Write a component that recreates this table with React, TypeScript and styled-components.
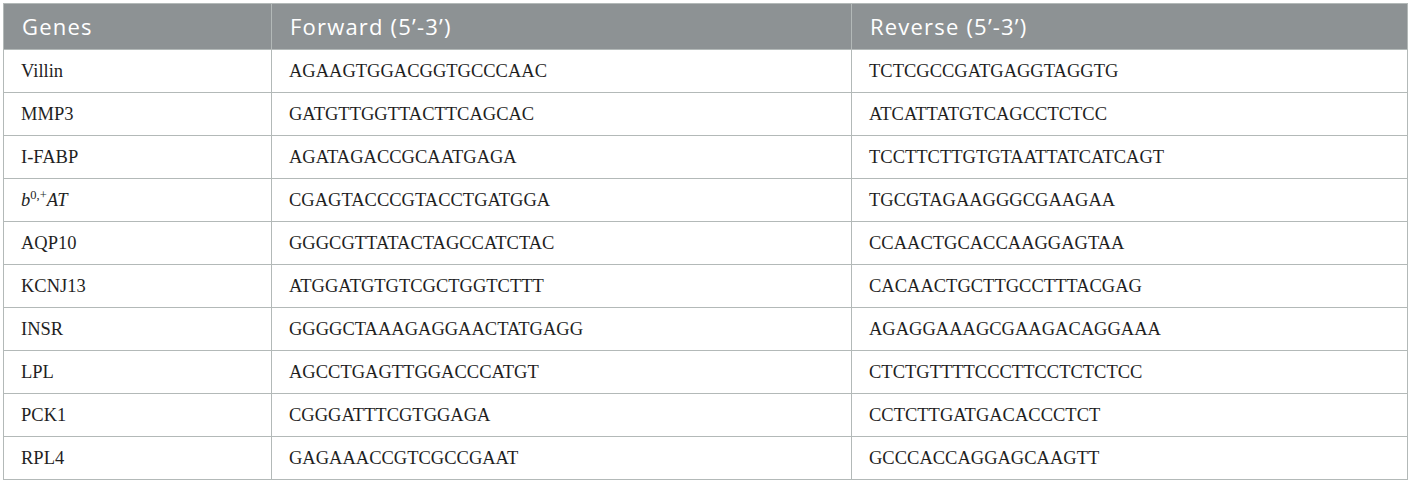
import React from "react";
import styled, { createGlobalStyle } from "styled-components";

const Global = createGlobalStyle`
  html, body { margin: 0; padding: 0; background: #ffffff; }
  body { padding: 3px 0 0 3px; }
`;

const Table = styled.table`
  width: 1404px;
  border-collapse: collapse;
  table-layout: fixed;
  border: 1.5px solid #b3b9b8;
`;

const HeadCell = styled.th<{ $w: number }>`
  width: ${(p) => p.$w}px;
  height: 46px;
  background: #8d9294;
  color: #ffffff;
  font-family: "Open Sans", "Noto Sans", sans-serif;
  font-weight: 400;
  font-size: 22px;
  letter-spacing: 1.2px;
  text-align: left;
  padding: 0 0 2px 18px;
  border-left: 1.5px solid #b3b9b8;
  box-sizing: border-box;
`;

const Row = styled.tr`
  border-top: 1.5px solid #b3b9b8;
`;

const Cell = styled.td`
  height: 43px;
  padding: 0 0 0 17px;
  font-family: "Times New Roman", "Liberation Serif", "Noto Serif", "DejaVu Serif", serif;
  font-size: 18.5px;
  color: #1f1f1f;
  border-left: 1.5px solid #b3b9b8;
  box-sizing: border-box;
`;

const Ital = styled.i`
  font-style: italic;
`;

const Sup = styled.sup`
  font-style: normal;
  font-size: 12.5px;
  vertical-align: 7px;
  line-height: 0;
`;

const rows: [React.ReactNode, string, string][] = [
  ["Villin", "AGAAGTGGACGGTGCCCAAC", "TCTCGCCGATGAGGTAGGTG"],
  ["MMP3", "GATGTTGGTTACTTCAGCAC", "ATCATTATGTCAGCCTCTCC"],
  ["I-FABP", "AGATAGACCGCAATGAGA", "TCCTTCTTGTGTAATTATCATCAGT"],
  [
    <Ital key="b">
      b<Sup>0,+</Sup>AT
    </Ital>,
    "CGAGTACCCGTACCTGATGGA",
    "TGCGTAGAAGGGCGAAGAA",
  ],
  ["AQP10", "GGGCGTTATACTAGCCATCTAC", "CCAACTGCACCAAGGAGTAA"],
  ["KCNJ13", "ATGGATGTGTCGCTGGTCTTT", "CACAACTGCTTGCCTTTACGAG"],
  ["INSR", "GGGGCTAAAGAGGAACTATGAGG", "AGAGGAAAGCGAAGACAGGAAA"],
  ["LPL", "AGCCTGAGTTGGACCCATGT", "CTCTGTTTTCCCTTCCTCTCTCC"],
  ["PCK1", "CGGGATTTCGTGGAGA", "CCTCTTGATGACACCCTCT"],
  ["RPL4", "GAGAAACCGTCGCCGAAT", "GCCCACCAGGAGCAAGTT"],
];

export default function App() {
  return (
    <>
      <Global />
      <Table>
        <thead>
          <tr>
            <HeadCell $w={268}>Genes</HeadCell>
            <HeadCell $w={580}>Forward (5’-3’)</HeadCell>
            <HeadCell $w={556}>Reverse (5’-3’)</HeadCell>
          </tr>
        </thead>
        <tbody>
          {rows.map((r, i) => (
            <Row key={i}>
              <Cell>{r[0]}</Cell>
              <Cell>{r[1]}</Cell>
              <Cell>{r[2]}</Cell>
            </Row>
          ))}
        </tbody>
      </Table>
    </>
  );
}
